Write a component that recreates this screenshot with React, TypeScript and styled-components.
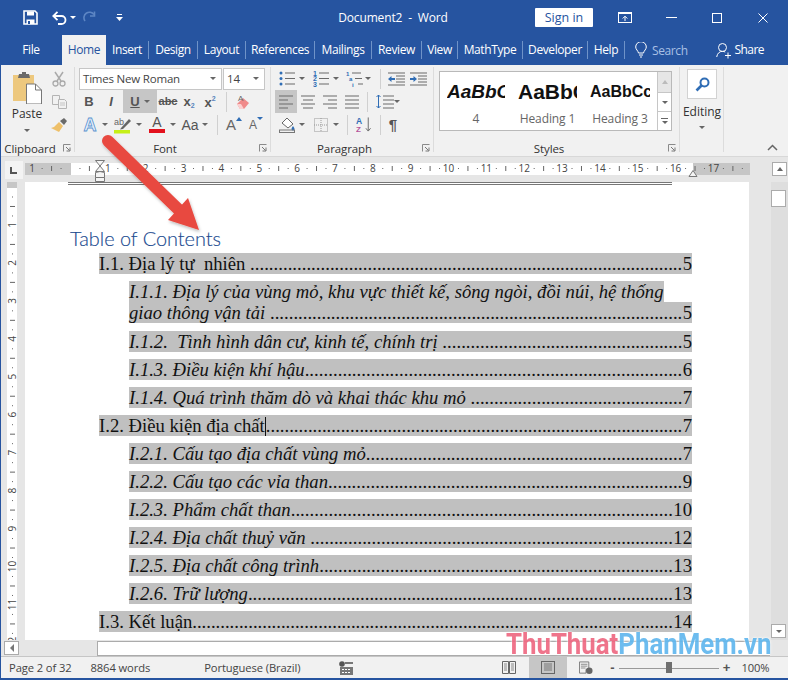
import React, { useLayoutEffect, useRef, useState } from "react";
import styled, { createGlobalStyle } from "styled-components";

const Global = createGlobalStyle`
  html, body { margin: 0; padding: 0; background: #2654a0; }
  * { box-sizing: border-box; }
`;

const UI = `"Open Sans", "Noto Sans", sans-serif`;
const BLUE = "#2654a0";

const Win = styled.div`
  position: relative; width: 788px; height: 680px; overflow: hidden;
  background: ${BLUE}; display: flex; flex-direction: column;
  font-family: ${UI}; color: #444; padding: 0 0 2px 1px;
`;
const TitleBar = styled.div`
  height: 35px; flex: none; margin-left: -1px; display: flex; align-items: center; color: #fff; position: relative;
`;
const Slot = styled.div<{ $w: number; $ml?: number }>`
  width: ${p => p.$w}px; margin-left: ${p => p.$ml || 0}px; flex: none;
  display: flex; align-items: center; justify-content: center;
`;
const DocTitle = styled.div`
  width: 120px; margin-left: 210px; text-align: center; font-size: 12px; white-space: pre; letter-spacing: -.15px;
`;
const SignIn = styled.div`
  width: 58px; height: 19px; margin-left: 82px; background: #fff; color: ${BLUE}; font-size: 12.5px;
  display: flex; align-items: center; justify-content: center; border-radius: 1px;
`;
const TabBar = styled.div`
  height: 30px; flex: none; margin-left: -1px; display: flex; align-items: center; color: #fff; font-size: 12px; letter-spacing: -.4px;
`;
const Tab = styled.div<{ $w: number; $sep?: boolean; $active?: boolean }>`
  width: ${p => p.$w}px; flex: none; text-align: center;
  height: ${p => (p.$active ? 30 : 18)}px; line-height: ${p => (p.$active ? 30 : 18)}px;
  background: ${p => (p.$active ? "#f1f1f1" : "transparent")};
  color: ${p => (p.$active ? BLUE : "#fff")};
  border-right: ${p => (p.$sep ? "1px solid #6f93c8" : "none")};
`;
const TabSpacer = styled.div<{ $w: number }>`width: ${p => p.$w}px; flex: none;`;
const SearchText = styled.span`color: #a9c0e4; margin-left: 5px;`;
const ShareText = styled.span`margin-left: 3px; letter-spacing: -.6px; margin-top: -2px;`;
const TellMe = styled.div`display: flex; align-items: center; flex: none;`;

const Ribbon = styled.div`
  height: 92px; flex: none; background: #f1f1f1; display: flex; border-bottom: 1px solid #d8d8d8; position: relative;
`;
const Group = styled.div<{ $w: number }>`
  width: ${p => p.$w}px; flex: none; display: flex; flex-direction: column; position: relative;
  &::after { content: ""; position: absolute; right: 0; top: 2px; bottom: 4px; width: 1px; background: #dcdcdc; }
`;
const GroupBody = styled.div`height: 75px; flex: none; padding-top: 2px;`;
const BodyRow = styled.div`height: 74px; display: flex;`;
const Footer = styled.div`
  height: 16px; flex: none; display: flex; align-items: center; font-size: 11.5px; letter-spacing: -.1px; color: #333;
`;
const FooterLabel = styled.div`flex: 1; text-align: center;`;
const Launcher = styled.div`width: 16px; flex: none; display: flex; justify-content: center;`;
const PasteCol = styled.div`
  width: 52px; flex: none; display: flex; flex-direction: column; align-items: center; font-size: 12px; color: #333; padding-top: 4px;
`;
const PasteLabel = styled.div`margin-top: 2px; line-height: 16px;`;
const SmallCol = styled.div`width: 22px; flex: none; display: flex; flex-direction: column; margin-left: -5px;`;
const SmallCell = styled.div`height: 23px; display: flex; align-items: center; justify-content: center;`;
const Stack = styled.div`display: flex; flex-direction: column;`;
const ToolRow = styled.div<{ $pl?: number }>`
  display: flex; align-items: center; height: 23px; padding-left: ${p => p.$pl || 0}px;
`;
const Combo = styled.div<{ $w: number }>`
  width: ${p => p.$w}px; height: 22px; background: #fff; border: 1px solid #c6c6c6; margin-right: 1px;
  display: flex; align-items: center; justify-content: space-between; font-size: 11.5px; letter-spacing: -.2px; color: #444;
  padding: 0 5px 0 3px;
`;
const Tool = styled.div<{ $w: number; $on?: boolean; $ml?: number }>`
  width: ${p => p.$w}px; height: 23px; flex: none; margin-left: ${p => p.$ml || 0}px;
  display: flex; align-items: center; justify-content: center; gap: 4px;
  background: ${p => (p.$on ? "#c6c6c6" : "transparent")};
`;
const Letter = styled.span<{ $i?: boolean; $u?: boolean; $s?: boolean; $size?: number; $thin?: boolean }>`
  font-family: "Liberation Sans", sans-serif; font-weight: ${p => (p.$thin ? 400 : 700)}; font-size: ${p => p.$size || 13}px; color: #555;
  font-style: ${p => (p.$i ? "italic" : "normal")};
  text-decoration: ${p => (p.$u ? "underline" : p.$s ? "line-through" : "none")};
  line-height: 1; white-space: nowrap;
`;
const EffectA = styled.span`
  font: 700 18px/1 "Liberation Sans", sans-serif; color: #e9f1fb; -webkit-text-stroke: .8px #5b93d0;
`;
const ColorA = styled.div<{ $bar: string }>`
  display: flex; flex-direction: column; align-items: center; width: 16px;
  font: 400 14px/12px "Liberation Sans", sans-serif; color: #555;
  &::after { content: ""; display: block; width: 16px; height: 4px; margin-top: 1px; background: ${p => p.$bar}; }
`;
const GrowA = styled.div<{ $size: number }>`
  display: flex; align-items: flex-start; font: 400 ${p => p.$size}px/16px "Liberation Sans", sans-serif; color: #666; gap: 0;
`;
const Sub = styled.sub`font-size: 7px; color: #5a84bd; vertical-align: -2px;`;
const Sup = styled.sup`font-size: 7px; color: #5a84bd; vertical-align: 6px;`;
const VSep = styled.div<{ $ml: number }>`width: 1px; height: 20px; background: #d0d0d0; margin-left: ${p => p.$ml}px; flex: none;`;
const Caret = styled.i<{ $c?: string }>`
  display: block; width: 0; height: 0; flex: none; border-left: 3px solid transparent; border-right: 3px solid transparent;
  border-top: 3px solid ${p => p.$c || "#666"};
`;
const Gallery = styled.div`
  margin: 4px 0 0 5px; width: 233px; height: 60px; display: flex; background: #fff; border: 1px solid #b9b9b9;
`;
const GalleryItems = styled.div`flex: 1; display: flex; padding-left: 7px; gap: 13px;`;
const StyleItem = styled.div<{ $w: number }>`width: ${p => p.$w}px; flex: none; display: flex; flex-direction: column; align-items: center;`;
const Preview = styled.div<{ $size: number; $i?: boolean }>`
  width: 100%; height: 40px; overflow: hidden; white-space: nowrap; display: flex; align-items: center;
  font-family: "Liberation Sans", sans-serif; font-weight: 700; color: #111;
  font-size: ${p => p.$size}px; font-style: ${p => (p.$i ? "italic" : "normal")};
`;
const StyleName = styled.div`font-size: 12px; color: #666; line-height: 14px; letter-spacing: -.1px;`;
const GalleryBar = styled.div`width: 14px; flex: none; display: flex; flex-direction: column; border-left: 1px solid #c6c6c6;`;
const GalleryBtn = styled.div<{ $h: number; $off?: boolean }>`
  height: ${p => p.$h}px; flex: none; display: flex; flex-direction: column; gap: 2px; align-items: center; justify-content: center;
  background: ${p => (p.$off ? "#e6e6e6" : "#fff")}; border-bottom: 1px solid #c6c6c6;
  &:last-child { border-bottom: none; }
`;
const UpCaret = styled.i<{ $c?: string }>`
  display: block; width: 0; height: 0; border-left: 3px solid transparent; border-right: 3px solid transparent;
  border-bottom: 4px solid ${p => p.$c || "#666"};
`;
const Dash = styled.i`display: block; width: 7px; height: 1px; background: #666;`;
const EditCol = styled.div`display: flex; flex-direction: column; align-items: center; font-size: 12px; color: #333; padding-top: 4px;`;
const EditBtn = styled.div`
  width: 30px; height: 30px; background: #fff; border: 1px solid #d2d2d2; display: flex; align-items: center; justify-content: center; margin-bottom: 5px;
`;
const EditLabel = styled.div`line-height: 16px; margin-bottom: 6px;`;
const RibbonEnd = styled.div`flex: 1; display: flex; align-items: flex-end; justify-content: flex-end; padding: 0 10px 5px 0;`;

const RulerBar = styled.div`height: 25px; flex: none; background: #e6e6e6; display: flex; align-items: flex-start;`;
const RulerDraw = styled.svg`display: block; flex: none;`;
const RulerFill = styled.div`flex: 1;`;
const ScrollBtn = styled.div<{ $mt?: number; $mb?: number }>`
  width: 15px; height: 14px; background: #fff; border: 1px solid #ababab; flex: none;
  margin-top: ${p => p.$mt || 0}px; margin-bottom: ${p => p.$mb || 0}px;
  display: flex; align-items: center; justify-content: center;
`;
const Main = styled.div`flex: 1; min-height: 0; display: flex; background: #e6e6e6;`;
const VRuler = styled.div`width: 24px; flex: none; overflow: hidden;`;
const Page = styled.div`width: 724px; flex: none; background: #fff; overflow: hidden; padding-left: 43px;`;
const HeaderRule = styled.div`width: 604px; height: 3px; border-top: 1px solid #777; border-bottom: 1px solid #777;`;
const TocHeading = styled.h1`
  margin: 40px 0 0 2px; font: 300 19.9px/26px Lato, sans-serif; color: #204a8f; -webkit-text-stroke: .15px #204a8f;
`;
const Toc = styled.div`margin: 2px 0 0 31px; width: 593px; font-family: "Liberation Serif", serif; font-size: 18.67px; color: #111; display: flex; flex-direction: column; gap: 7px;`;
const TocEntry = styled.div<{ $sub?: boolean; $mb?: number }>`
  margin-left: ${p => (p.$sub ? 30 : 0)}px; font-style: ${p => (p.$sub ? "italic" : "normal")};
  margin-bottom: ${p => p.$mb || 0}px;
`;
const TocLine = styled.div<{ $fit?: boolean }>`
  display: ${p => (p.$fit ? "table" : "flex")}; height: 21px; line-height: 21px; background: #c0c0c0; white-space: pre;
`;
const LeaderBox = styled.span`flex: 1; min-width: 0; font-style: normal;`;
const PageNo = styled.span`flex: none; font-style: normal;`;
const TextCaret = styled.span`display: inline-block; width: 1px; height: 19px; background: #111; vertical-align: -4px;`;
const VBar = styled.div`width: 39px; flex: none; display: flex; background: #e6e6e6;`;
const VBarGap = styled.div`width: 22px; flex: none;`;
const VTrack = styled.div`flex: 1; display: flex; flex-direction: column; background: #dedede;`;
const Thumb = styled.div`width: 15px; height: 17px; margin-top: 8px; background: #fff; border: 1px solid #ababab;`;
const VTrackFill = styled.div`flex: 1;`;
const HBar = styled.div`
  height: 17px; flex: none; display: flex; background: #e6e6e6; padding: 1px 18px 0 3px; align-items: flex-start;
  border-bottom: 1px solid #c6c6c6; margin-top: -1px;
`;
const HThumb = styled.div`flex: 1; height: 15px; background: #fff; margin-left: 78px; border: 1px solid #ababab; border-right: none;`;
const LeftCaret = styled.i`
  display: block; width: 0; height: 0; border-top: 4px solid transparent; border-bottom: 4px solid transparent; border-right: 4px solid #777;
`;
const Status = styled.div`
  height: 21px; flex: none; background: #f1f1f1; display: flex; align-items: stretch; font-size: 11.2px; color: #444; letter-spacing: -.1px;
`;
const StatusText = styled.div<{ $ml: number }>`margin-left: ${p => p.$ml}px; display: flex; align-items: center; flex: none; white-space: nowrap;`;
const ViewBtn = styled.div<{ $w: number; $ml: number; $on?: boolean }>`
  width: ${p => p.$w}px; margin-left: ${p => p.$ml}px; flex: none; display: flex; align-items: center; justify-content: center;
  background: ${p => (p.$on ? "#c6c6c6" : "transparent")};
`;
const ZoomGlyph = styled.div<{ $ml: number }>`margin-left: ${p => p.$ml}px; width: 8px; flex: none; display: flex; align-items: center; justify-content: center; font: 700 13px "Liberation Sans", sans-serif; color: #555;`;
const ZoomTrack = styled.div`
  width: 100px; margin-left: 3px; flex: none; position: relative; display: flex; align-items: center; justify-content: center;
  &::before { content: ""; position: absolute; left: 0; right: 0; top: 50%; height: 1px; background: #999; }
`;
const ZoomThumb = styled.div`width: 6px; height: 11px; background: #6f6f6f; position: relative;`;
const Arrow = styled.svg`position: absolute; left: 0; top: 0; pointer-events: none;`;
const Watermark = styled.div`
  position: absolute; left: 506px; top: 631px; font: 700 30px/26px Roboto, sans-serif; white-space: nowrap;
  transform: scaleX(.86); transform-origin: left center; opacity: .93;
  text-shadow: 0 0 2px rgba(255,255,255,.9), 0 0 3px rgba(255,255,255,.7);
`;
const WmPink = styled.span`color: #ee6a83;`;
const WmBlue = styled.span`color: #62b8ee;`;

const g = "#6a6a6a";
const Lines = ({ rows }: { rows: [number, number][] }) => (
  <svg width="18" height="14" viewBox="0 0 18 14">
    {rows.map(([x, w], i) => <rect key={i} x={x} y={1 + i * (12 / (rows.length - 1 || 1)) - 0.5} width={w} height="1" fill={g} />)}
  </svg>
);
const ListIcon = ({ kind }: { kind: number }) => (
  <svg width="17" height="17" viewBox="0 0 17 17">
    {[3, 8.5, 14].map((y, i) => (
      <g key={i}>
        {kind === 0 && <circle cx={2} cy={y} r="1.5" fill="#2f6db5" />}
        {kind === 1 && <text x="0" y={y + 2.5} fontSize="7" fontFamily="Liberation Sans" fill="#2f6db5" fontWeight="700">{i + 1}</text>}
        {kind === 2 && <text x={i * 3} y={y + 2.5} fontSize="6" fontFamily="Liberation Sans" fill="#2f6db5" fontWeight="700">{["1", "a", "i"][i]}</text>}
        <rect x={kind === 2 ? 6 + i * 3 : 6} y={y - .5} width={kind === 2 ? 9 - i * 2 : 10} height="1" fill={g} />
      </g>
    ))}
  </svg>
);
const IndentIcon = ({ dir }: { dir: number }) => (
  <svg width="17" height="14" viewBox="0 0 17 14">
    {[1, 4, 7, 10, 13].map(y => <rect key={y} x={y === 1 || y === 13 ? 0 : 8} y={y - .5} width={y === 1 || y === 13 ? 17 : 9} height="1" fill={g} />)}
    <path d={dir < 0 ? "M0 7l3.5-3v2H7v2H3.5v2z" : "M7 7L3.5 4v2H0v2h3.5v2z"} fill="#2f6db5" />
  </svg>
);
const launcher = (
  <svg width="8" height="8" viewBox="0 0 8 8"><path d="M.5 7.5V.5h7" fill="none" stroke="#8a8a8a" /><path d="M3 3l3.5 3.5M7 3.5V7H3.5" fill="none" stroke="#777" /></svg>
);

const Ruler = () => {
  const z = 69, u = 37.85;
  const ticks: React.ReactNode[] = [];
  for (let q = -7; q <= 71; q++) {
    const x = z + (q * u) / 4;
    if (x < 25 || x > 748) continue;
    const m = ((q % 4) + 4) % 4;
    if (m === 0) {
      const n = Math.abs(q / 4);
      if (q !== 0) ticks.push(<text key={q} x={x} y={172} textAnchor="middle" fontSize="10" fontFamily="Open Sans" fill="#444">{n}</text>);
    } else if (m === 2) ticks.push(<rect key={q} x={x} y={166} width="1" height="5" fill="#666" />);
    else ticks.push(<rect key={q} x={x} y={168} width="1" height="1" fill="#666" />);
  }
  return (
    <RulerDraw width="749" height="25" viewBox="0 157 749 25">
      <rect x="4" y="161" width="18" height="18" fill="#f3f3f3" />
      <path d="M10 167v6h6" fill="none" stroke="#555" strokeWidth="2" />
      <rect x="24" y="163" width="46" height="12" fill="#c6c6c6" />
      <rect x="70" y="163" width="622" height="12" fill="#fff" />
      <rect x="692" y="163" width="57" height="12" fill="#c6c6c6" />
      {ticks}
      <path d="M94.500 160.500h9l-4.500 5.500 4.500 5.500h-9l4.500-5.500z" fill="#f4f4f4" stroke="#777" />
      <path d="M94.500 172.500l4.500-1 4.500 1v5h-9z" fill="#f4f4f4" stroke="#777" />
      <path d="M94.500 177.500h9v4h-9z" fill="#f4f4f4" stroke="#777" />
      <path d="M688 176.500l4-6 4 6z" fill="#f4f4f4" stroke="#777" />
    </RulerDraw>
  );
};

const VerticalRuler = () => {
  const items: React.ReactNode[] = [];
  for (let q = 0; q <= 48; q++) {
    const y = 187 + (q * 37.95) / 4;
    const m = q % 4;
    if (m === 0) {
      if (q > 0) items.push(<text key={q} x={0} y={0} transform={`translate(15.5 ${y}) rotate(-90)`} textAnchor="middle" fontSize="10" fontFamily="Open Sans" fill="#444">{q / 4}</text>);
    } else if (m === 2) items.push(<rect key={q} x="10" y={y} width="5" height="1" fill="#666" />);
    else items.push(<rect key={q} x="12" y={y} width="1" height="1" fill="#666" />);
  }
  return (
    <svg width="24" height="458" viewBox="1 182 24 458" style={{ display: "block" }}>
      <rect x="7" y="182" width="10" height="6" fill="#c6c6c6" />
      <rect x="7" y="188" width="10" height="452" fill="#fff" />
      {items}
    </svg>
  );
};

const DOT_WIDTH = 18.67 / 4;
const Leader = () => {
  const ref = useRef<HTMLSpanElement>(null);
  const [fit, setFit] = useState({ count: 0, spacing: 0 });
  useLayoutEffect(() => {
    if (!ref.current) return;
    const w = ref.current.getBoundingClientRect().width;
    const count = Math.floor(w / DOT_WIDTH);
    setFit({ count, spacing: count ? (w - count * DOT_WIDTH) / count - 0.001 : 0 });
  }, []);
  return <LeaderBox ref={ref} style={{ letterSpacing: fit.spacing }}>{".".repeat(fit.count)}</LeaderBox>;
};

const Entry = ({ t, n, sub, caret }: { t: string; n: number; sub?: boolean; caret?: boolean }) => (
  <TocEntry $sub={sub}>
    <TocLine>
      <span>{t}{caret && <TextCaret />}</span><Leader /><PageNo>{n}</PageNo>
    </TocLine>
  </TocEntry>
);

export default function App() {
  return (
    <>
      <Global />
      <Win>
        <TitleBar>
          <Slot $w={16} $ml={22}>
            <svg width="15" height="15" viewBox="0 0 15 15"><path d="M1 1h11l2 2v11H1z" fill="none" stroke="#fff" strokeWidth="1.6" /><path d="M4 1.500h7v4H4zM3.500 9.500h8V14h-8z" fill="#fff" /><rect x="5" y="11" width="2" height="3" fill="#2654a0" /></svg>
          </Slot>
          <Slot $w={16} $ml={13}>
            <svg width="15" height="14" viewBox="0 0 15 14"><path d="M2 5h7.500a4 4 0 010 8H6" fill="none" stroke="#fff" strokeWidth="1.8" /><path d="M5.500 .8L1.300 5l4.200 4.200" fill="none" stroke="#fff" strokeWidth="1.8" /></svg>
          </Slot>
          <Slot $w={6} $ml={3}><Caret $c="#fff" /></Slot>
          <Slot $w={15} $ml={6}>
            <svg width="14" height="14" viewBox="0 0 14 14"><path d="M11 3.500A5.500 5.500 0 102 10" fill="none" stroke="#5d86c4" strokeWidth="1.6" /><path d="M11.500 .5v4.500H7" fill="none" stroke="#5d86c4" strokeWidth="1.6" /></svg>
          </Slot>
          <Slot $w={8} $ml={18}>
            <svg width="7" height="7" viewBox="0 0 7 7"><rect x="1" y="0" width="5" height="1" fill="#fff" /><path d="M0 3h7L3.500 7z" fill="#fff" /></svg>
          </Slot>
          <DocTitle>{"Document2  -  Word"}</DocTitle>
          <SignIn>Sign in</SignIn>
          <Slot $w={14} $ml={25}>
            <svg width="14" height="11" viewBox="0 0 14 11"><rect x=".5" y=".5" width="13" height="10" fill="none" stroke="#fff" /><rect x="0" y="0" width="14" height="2" fill="#fff" /><path d="M7 9V4.500M4.700 6.500L7 4.200l2.300 2.300" fill="none" stroke="#fff" /></svg>
          </Slot>
          <Slot $w={11} $ml={34}><svg width="11" height="1" viewBox="0 0 11 1"><rect width="11" height="1" fill="#fff" /></svg></Slot>
          <Slot $w={10} $ml={35}><svg width="10" height="10" viewBox="0 0 10 10"><rect x=".5" y=".5" width="9" height="9" fill="none" stroke="#fff" /></svg></Slot>
          <Slot $w={10} $ml={36}><svg width="10" height="10" viewBox="0 0 10 10"><path d="M.5.500l9 9M9.500.500l-9 9" stroke="#fff" /></svg></Slot>
        </TitleBar>

        <TabBar>
          <Tab $w={62}>File</Tab>
          <Tab $w={44} $active>Home</Tab>
          <Tab $w={43} $sep>Insert</Tab>
          <Tab $w={49} $sep>Design</Tab>
          <Tab $w={48} $sep>Layout</Tab>
          <Tab $w={69} $sep>References</Tab>
          <Tab $w={57} $sep>Mailings</Tab>
          <Tab $w={50} $sep>Review</Tab>
          <Tab $w={36} $sep>View</Tab>
          <Tab $w={65} $sep>MathType</Tab>
          <Tab $w={65} $sep>Developer</Tab>
          <Tab $w={37} $sep>Help</Tab>
          <TabSpacer $w={10} />
          <TellMe>
            <svg width="12" height="16" viewBox="0 0 12 16"><path d="M3.500 11C3 8.500.7 7.500.7 5a5.300 5.300 0 0110.600 0c0 2.500-2.300 3.500-2.800 6z" fill="none" stroke="#fff" /><path d="M4 13h4M5 15h2" stroke="#fff" /></svg>
            <SearchText>Search</SearchText>
          </TellMe>
          <TabSpacer $w={28} />
          <TellMe>
            <svg width="16" height="17" viewBox="0 0 16 17"><circle cx="6.500" cy="5.500" r="4" fill="none" stroke="#fff" /><path d="M.7 15c.5-3.500 2.800-5.700 5.800-5.700 1 0 2 .3 2.700.8" fill="none" stroke="#fff" /><path d="M12 10.500v6M9 13.500h6" stroke="#fff" /></svg>
            <ShareText>Share</ShareText>
          </TellMe>
        </TabBar>

        <Ribbon>
          <Group $w={74}>
            <GroupBody>
              <BodyRow>
                <PasteCol>
                  <svg width="30" height="33" viewBox="0 0 30 33">
                    <path d="M1 4h21v26H1z" fill="#edc87e" />
                    <path d="M7 3h3V1h4v2h3l1 4H6z" fill="#6a6a6a" />
                    <path d="M14.500 13h9l6 6v14h-15z" fill="#fff" stroke="#777" />
                    <path d="M23.500 13v6h6" fill="none" stroke="#777" />
                  </svg>
                  <PasteLabel>Paste</PasteLabel>
                  <Slot $w={8}><svg width="8" height="12" viewBox="0 0 8 12"><path d="M1 7h6L4 10z" fill="#666" /></svg></Slot>
                </PasteCol>
                <SmallCol>
                  <SmallCell>
                    <svg width="14" height="16" viewBox="0 0 14 16"><path d="M3 1l6 9M11 1L5 10" stroke="#aaa" strokeWidth="1.5" /><circle cx="3.500" cy="12.500" r="2.500" fill="none" stroke="#aaa" strokeWidth="1.300" /><circle cx="10.500" cy="12.500" r="2.500" fill="none" stroke="#aaa" strokeWidth="1.300" /></svg>
                  </SmallCell>
                  <SmallCell>
                    <svg width="15" height="14" viewBox="0 0 15 14"><path d="M.5.500h7v9h-7z" fill="#f1f1f1" stroke="#b4b4b4" /><path d="M6.500 4.500h6l2 2v7h-8z" fill="#f1f1f1" stroke="#b4b4b4" /><path d="M8 8h5M8 10h5" stroke="#c4c4c4" /></svg>
                  </SmallCell>
                  <SmallCell>
                    <svg width="16" height="14" viewBox="0 0 16 14"><path d="M8 4l4 4-4 6-8-4 3-1z" fill="#eec06a" /><path d="M9 3l4-3 3 3-3 4z" fill="#6a6a6a" /></svg>
                  </SmallCell>
                </SmallCol>
              </BodyRow>
            </GroupBody>
            <Footer>
              <FooterLabel>Clipboard</FooterLabel>
              <Launcher>{launcher}</Launcher>
            </Footer>
          </Group>

          <Group $w={196}>
            <GroupBody>
              <Stack>
                <ToolRow $pl={4}>
                  <Combo $w={143}>Times New Roman<Caret /></Combo>
                  <Combo $w={42}>14<Caret /></Combo>
                </ToolRow>
                <ToolRow $pl={3}>
                  <Tool $w={22}><Letter>B</Letter></Tool>
                  <Tool $w={22}><Letter $i>I</Letter></Tool>
                  <Tool $w={34} $on $ml={1}><Letter $u>U</Letter><Caret /></Tool>
                  <Tool $w={22}><Letter $s $size={11}>abc</Letter></Tool>
                  <Tool $w={20}><Letter>x<Sub>2</Sub></Letter></Tool>
                  <Tool $w={20} $ml={1}><Letter>x<Sup>2</Sup></Letter></Tool>
                  <VSep $ml={6} />
                  <Tool $w={20} $ml={6}>
                    <svg width="16" height="18" viewBox="0 0 16 18"><path d="M2 11l6-6 6 5-5 6H5z" fill="#f08a8a" /><path d="M2 11l3 5h4l-3-5z" fill="#fbd0d0" /><text x="3" y="8" fontSize="8" fontFamily="Liberation Sans" fill="#666">A</text></svg>
                  </Tool>
                </ToolRow>
                <ToolRow $pl={5}>
                  <Slot $w={20}><EffectA>A</EffectA></Slot>
                  <Slot $w={6} $ml={2}><Caret /></Slot>
                  <Slot $w={20} $ml={5}>
                    <svg width="18" height="18" viewBox="0 0 18 18"><text x="0" y="9" fontSize="9" fontFamily="Liberation Sans" fill="#666">ab</text><path d="M7 12l8-9 2 2-8 8-3 .5z" fill="#666" /><rect x="0" y="14" width="16" height="3.500" fill="#c6ef17" /></svg>
                  </Slot>
                  <Slot $w={6} $ml={3}><Caret /></Slot>
                  <Slot $w={18} $ml={6}><ColorA $bar="#e3111d">A</ColorA></Slot>
                  <Slot $w={6} $ml={4}><Caret /></Slot>
                  <Slot $w={18} $ml={5}><Letter $thin $size={14}>Aa</Letter></Slot>
                  <Slot $w={6} $ml={3}><Caret /></Slot>
                  <VSep $ml={9} />
                  <Slot $w={14} $ml={9}>
                    <GrowA $size={15}>A<UpCaret $c="#2f6db5" /></GrowA>
                  </Slot>
                  <Slot $w={14} $ml={8}>
                    <GrowA $size={12}>A<Caret $c="#2f6db5" /></GrowA>
                  </Slot>
                </ToolRow>
              </Stack>
            </GroupBody>
            <Footer>
              <FooterLabel>Font</FooterLabel>
              <Launcher>{launcher}</Launcher>
            </Footer>
          </Group>

          <Group $w={163}>
            <GroupBody>
              <Stack>
                <ToolRow $pl={8}>
                  <ListIcon kind={0} /><Slot $w={6} $ml={3}><Caret /></Slot>
                  <Slot $w={17} $ml={8}><ListIcon kind={1} /></Slot><Slot $w={6} $ml={3}><Caret /></Slot>
                  <Slot $w={17} $ml={7}><ListIcon kind={2} /></Slot><Slot $w={6} $ml={2}><Caret /></Slot>
                  <VSep $ml={9} />
                  <Slot $w={17} $ml={7}><IndentIcon dir={-1} /></Slot>
                  <Slot $w={17} $ml={5}><IndentIcon dir={1} /></Slot>
                </ToolRow>
                <ToolRow $pl={4}>
                  <Tool $w={22} $on><Lines rows={[[2, 14], [2, 9], [2, 14], [2, 9]]} /></Tool>
                  <Tool $w={22}><Lines rows={[[2, 14], [4, 10], [2, 14], [4, 10]]} /></Tool>
                  <Tool $w={22}><Lines rows={[[2, 14], [7, 9], [2, 14], [7, 9]]} /></Tool>
                  <Tool $w={22}><Lines rows={[[2, 14], [2, 14], [2, 14], [2, 14]]} /></Tool>
                  <VSep $ml={4} />
                  <Slot $w={18} $ml={8}>
                    <svg width="18" height="15" viewBox="0 0 18 15"><path d="M2.500 1v13" stroke="#2f6db5" /><path d="M.5 3l2-2 2 2M.5 12l2 2 2-2" fill="none" stroke="#2f6db5" /><path d="M7 2h11M7 6h11M7 10h11M7 14h11" stroke={g} /></svg>
                  </Slot>
                  <Slot $w={6}><Caret /></Slot>
                </ToolRow>
                <ToolRow $pl={8}>
                  <svg width="17" height="16" viewBox="0 0 17 16"><path d="M3 6l5-5 6 6-5 4z" fill="#fff" stroke="#666" /><path d="M14 9c1 1.500 1.500 2.200 1.500 3a1.500 1.500 0 01-3 0c0-.8.5-1.500 1.500-3z" fill="#2f6db5" /><rect x=".5" y="13" width="15" height="2.500" fill="none" stroke="#777" /></svg>
                  <Slot $w={6} $ml={3}><Caret /></Slot>
                  <Slot $w={15} $ml={8}>
                    <svg width="14" height="14" viewBox="0 0 14 14"><rect x=".5" y=".5" width="13" height="13" fill="none" stroke="#999" strokeDasharray="1 1" /><path d="M7 0v14M0 7h14" stroke="#999" strokeDasharray="1 1" /></svg>
                  </Slot>
                  <Slot $w={6} $ml={5}><Caret /></Slot>
                  <VSep $ml={8} />
                  <Slot $w={16} $ml={8}>
                    <svg width="17" height="19" viewBox="0 0 17 19"><text x="0" y="9" fontSize="9" fontFamily="Liberation Sans" fontWeight="700" fill="#2f6db5">A</text><text x="0" y="17.500" fontSize="8.500" fontFamily="Liberation Sans" fontWeight="700" fill="#b5559c">Z</text><path d="M13 2v14M10.500 13.500L13 16.500l2.500-3" fill="none" stroke="#666" /></svg>
                  </Slot>
                  <VSep $ml={8} />
                  <Slot $w={12} $ml={6}><Letter $size={15}>¶</Letter></Slot>
                </ToolRow>
              </Stack>
            </GroupBody>
            <Footer>
              <FooterLabel>Paragraph</FooterLabel>
              <Launcher>{launcher}</Launcher>
            </Footer>
          </Group>

          <Group $w={246}>
            <GroupBody>
              <Gallery>
                <GalleryItems>
                  <StyleItem $w={58}><Preview $size={19} $i>AaBbCc</Preview><StyleName>4</StyleName></StyleItem>
                  <StyleItem $w={59}><Preview $size={21}>AaBbCc</Preview><StyleName>Heading 1</StyleName></StyleItem>
                  <StyleItem $w={60}><Preview $size={16}>AaBbCc</Preview><StyleName>Heading 3</StyleName></StyleItem>
                </GalleryItems>
                <GalleryBar>
                  <GalleryBtn $h={21} $off><UpCaret $c="#bbb" /></GalleryBtn>
                  <GalleryBtn $h={19}><Caret /></GalleryBtn>
                  <GalleryBtn $h={18}><Dash /><Caret /></GalleryBtn>
                </GalleryBar>
              </Gallery>
            </GroupBody>
            <Footer>
              <FooterLabel>Styles</FooterLabel>
              <Launcher>{launcher}</Launcher>
            </Footer>
          </Group>

          <Group $w={44}>
            <EditCol>
              <EditBtn>
                <svg width="15" height="15" viewBox="0 0 15 15"><circle cx="9.500" cy="5.500" r="4" fill="none" stroke="#2f6db5" strokeWidth="2" /><path d="M6.500 8.500L1.500 13.500" stroke="#2f6db5" strokeWidth="2.600" /></svg>
              </EditBtn>
              <EditLabel>Editing</EditLabel>
              <Caret />
            </EditCol>
          </Group>
          <RibbonEnd>
            <svg width="11" height="7" viewBox="0 0 11 7"><path d="M1 6l4.500-4.500L10 6" fill="none" stroke="#666" strokeWidth="1.500" /></svg>
          </RibbonEnd>
        </Ribbon>

        <RulerBar>
          <Ruler />
          <RulerFill />
          <ScrollBtn $mt={5}><UpCaret /></ScrollBtn>
          <Slot $w={1} />
        </RulerBar>

        <Main>
          <VRuler><VerticalRuler /></VRuler>
          <Page>
            <HeaderRule />
            <TocHeading>Table of Contents</TocHeading>
            <Toc>
              <Entry t="I.1. Địa lý tự  nhiên " n={5} />
              <TocEntry $sub $mb={1}>
                <TocLine $fit>I.1.1. Địa lý của vùng mỏ, khu vực thiết kế, sông ngòi, đồi núi, hệ thống</TocLine>
                <TocLine><span>giao thông vận tải </span><Leader /><PageNo>5</PageNo></TocLine>
              </TocEntry>
              <Entry sub t="I.1.2.  Tình hình dân cư, kinh tế, chính trị " n={5} />
              <Entry sub t="I.1.3. Điều kiện khí hậu" n={6} />
              <Entry sub t="I.1.4. Quá trình thăm dò và khai thác khu mỏ " n={7} />
              <Entry t="I.2. Điều kiện địa chất" n={7} caret />
              <Entry sub t="I.2.1. Cấu tạo địa chất vùng mỏ" n={7} />
              <Entry sub t="I.2.2. Cấu tạo các vỉa than" n={9} />
              <Entry sub t="I.2.3. Phẩm chất than" n={10} />
              <Entry sub t="I.2.4. Địa chất thuỷ văn " n={12} />
              <Entry sub t="I.2.5. Địa chất công trình" n={13} />
              <Entry sub t="I.2.6. Trữ lượng" n={13} />
              <Entry t="I.3. Kết luận" n={14} />
            </Toc>
          </Page>
          <VBar>
            <VBarGap />
            <VTrack>
              <Thumb />
              <VTrackFill />
              <ScrollBtn $mb={3}><Caret /></ScrollBtn>
            </VTrack>
          </VBar>
        </Main>

        <HBar>
          <ScrollBtn><LeftCaret /></ScrollBtn>
          <HThumb />
        </HBar>

        <Status>
          <StatusText $ml={8}>Page 2 of 32</StatusText>
          <StatusText $ml={19}>8864 words</StatusText>
          <StatusText $ml={54}>Portuguese (Brazil)</StatusText>
          <StatusText $ml={39}>
            <svg width="14" height="14" viewBox="0 0 14 14"><circle cx="3" cy="3" r="2.800" fill="#555" /><path d="M6 1h8v2H6zM1 6h13v8H1z" fill="#777" /><path d="M3 8h2v1H3zM6 8h2v1H6zM9 8h2v1H9zM3 11h2v1H3zM6 11h2v1H6zM9 11h2v1H9z" fill="#fff" /></svg>
          </StatusText>
          <StatusText $ml={149}>
            <svg width="14" height="13" viewBox="0 0 14 13"><path d="M.5.500h6v12h-6zM7.500.500h6v12h-6z" fill="none" stroke="#666" /><path d="M2 3h3M2 5h3M2 7h3M2 9h3M9 3h3M9 5h3M9 7h3M9 9h3" stroke="#888" /></svg>
          </StatusText>
          <ViewBtn $w={38} $ml={13} $on>
            <svg width="14" height="13" viewBox="0 0 14 13"><rect x=".5" y=".5" width="13" height="12" fill="none" stroke="#666" /><path d="M3 3h8M3 5h8M3 7h8M3 9h8" stroke="#777" /></svg>
          </ViewBtn>
          <ViewBtn $w={14} $ml={12}>
            <svg width="15" height="14" viewBox="0 0 15 14"><path d="M.5.500h10v8h-3v4h-7z" fill="none" stroke="#777" /><path d="M2 3h7M2 5h7M2 7h5" stroke="#888" /><circle cx="11" cy="10" r="3.500" fill="#666" /></svg>
          </ViewBtn>
          <ZoomGlyph $ml={15}>-</ZoomGlyph>
          <ZoomTrack><ZoomThumb /></ZoomTrack>
          <ZoomGlyph $ml={3}>+</ZoomGlyph>
          <StatusText $ml={11}>100%</StatusText>
        </Status>

        <Arrow width="788" height="680" viewBox="0 0 788 680">
          <defs>
            <filter id="sh" x="-20%" y="-20%" width="140%" height="140%">
              <feDropShadow dx="1" dy="2" stdDeviation="1.500" floodColor="#000" floodOpacity=".25" />
            </filter>
          </defs>
          <g filter="url(#sh)">
            <path d="M108 141L180 211" stroke="#e8483f" strokeWidth="12" strokeLinecap="round" fill="none" />
            <path d="M199 230L168 220L188 198z" fill="#e8483f" />
          </g>
        </Arrow>
        <Watermark><WmPink>ThuThuat</WmPink><WmBlue>PhanMem.vn</WmBlue></Watermark>
      </Win>
    </>
  );
}
